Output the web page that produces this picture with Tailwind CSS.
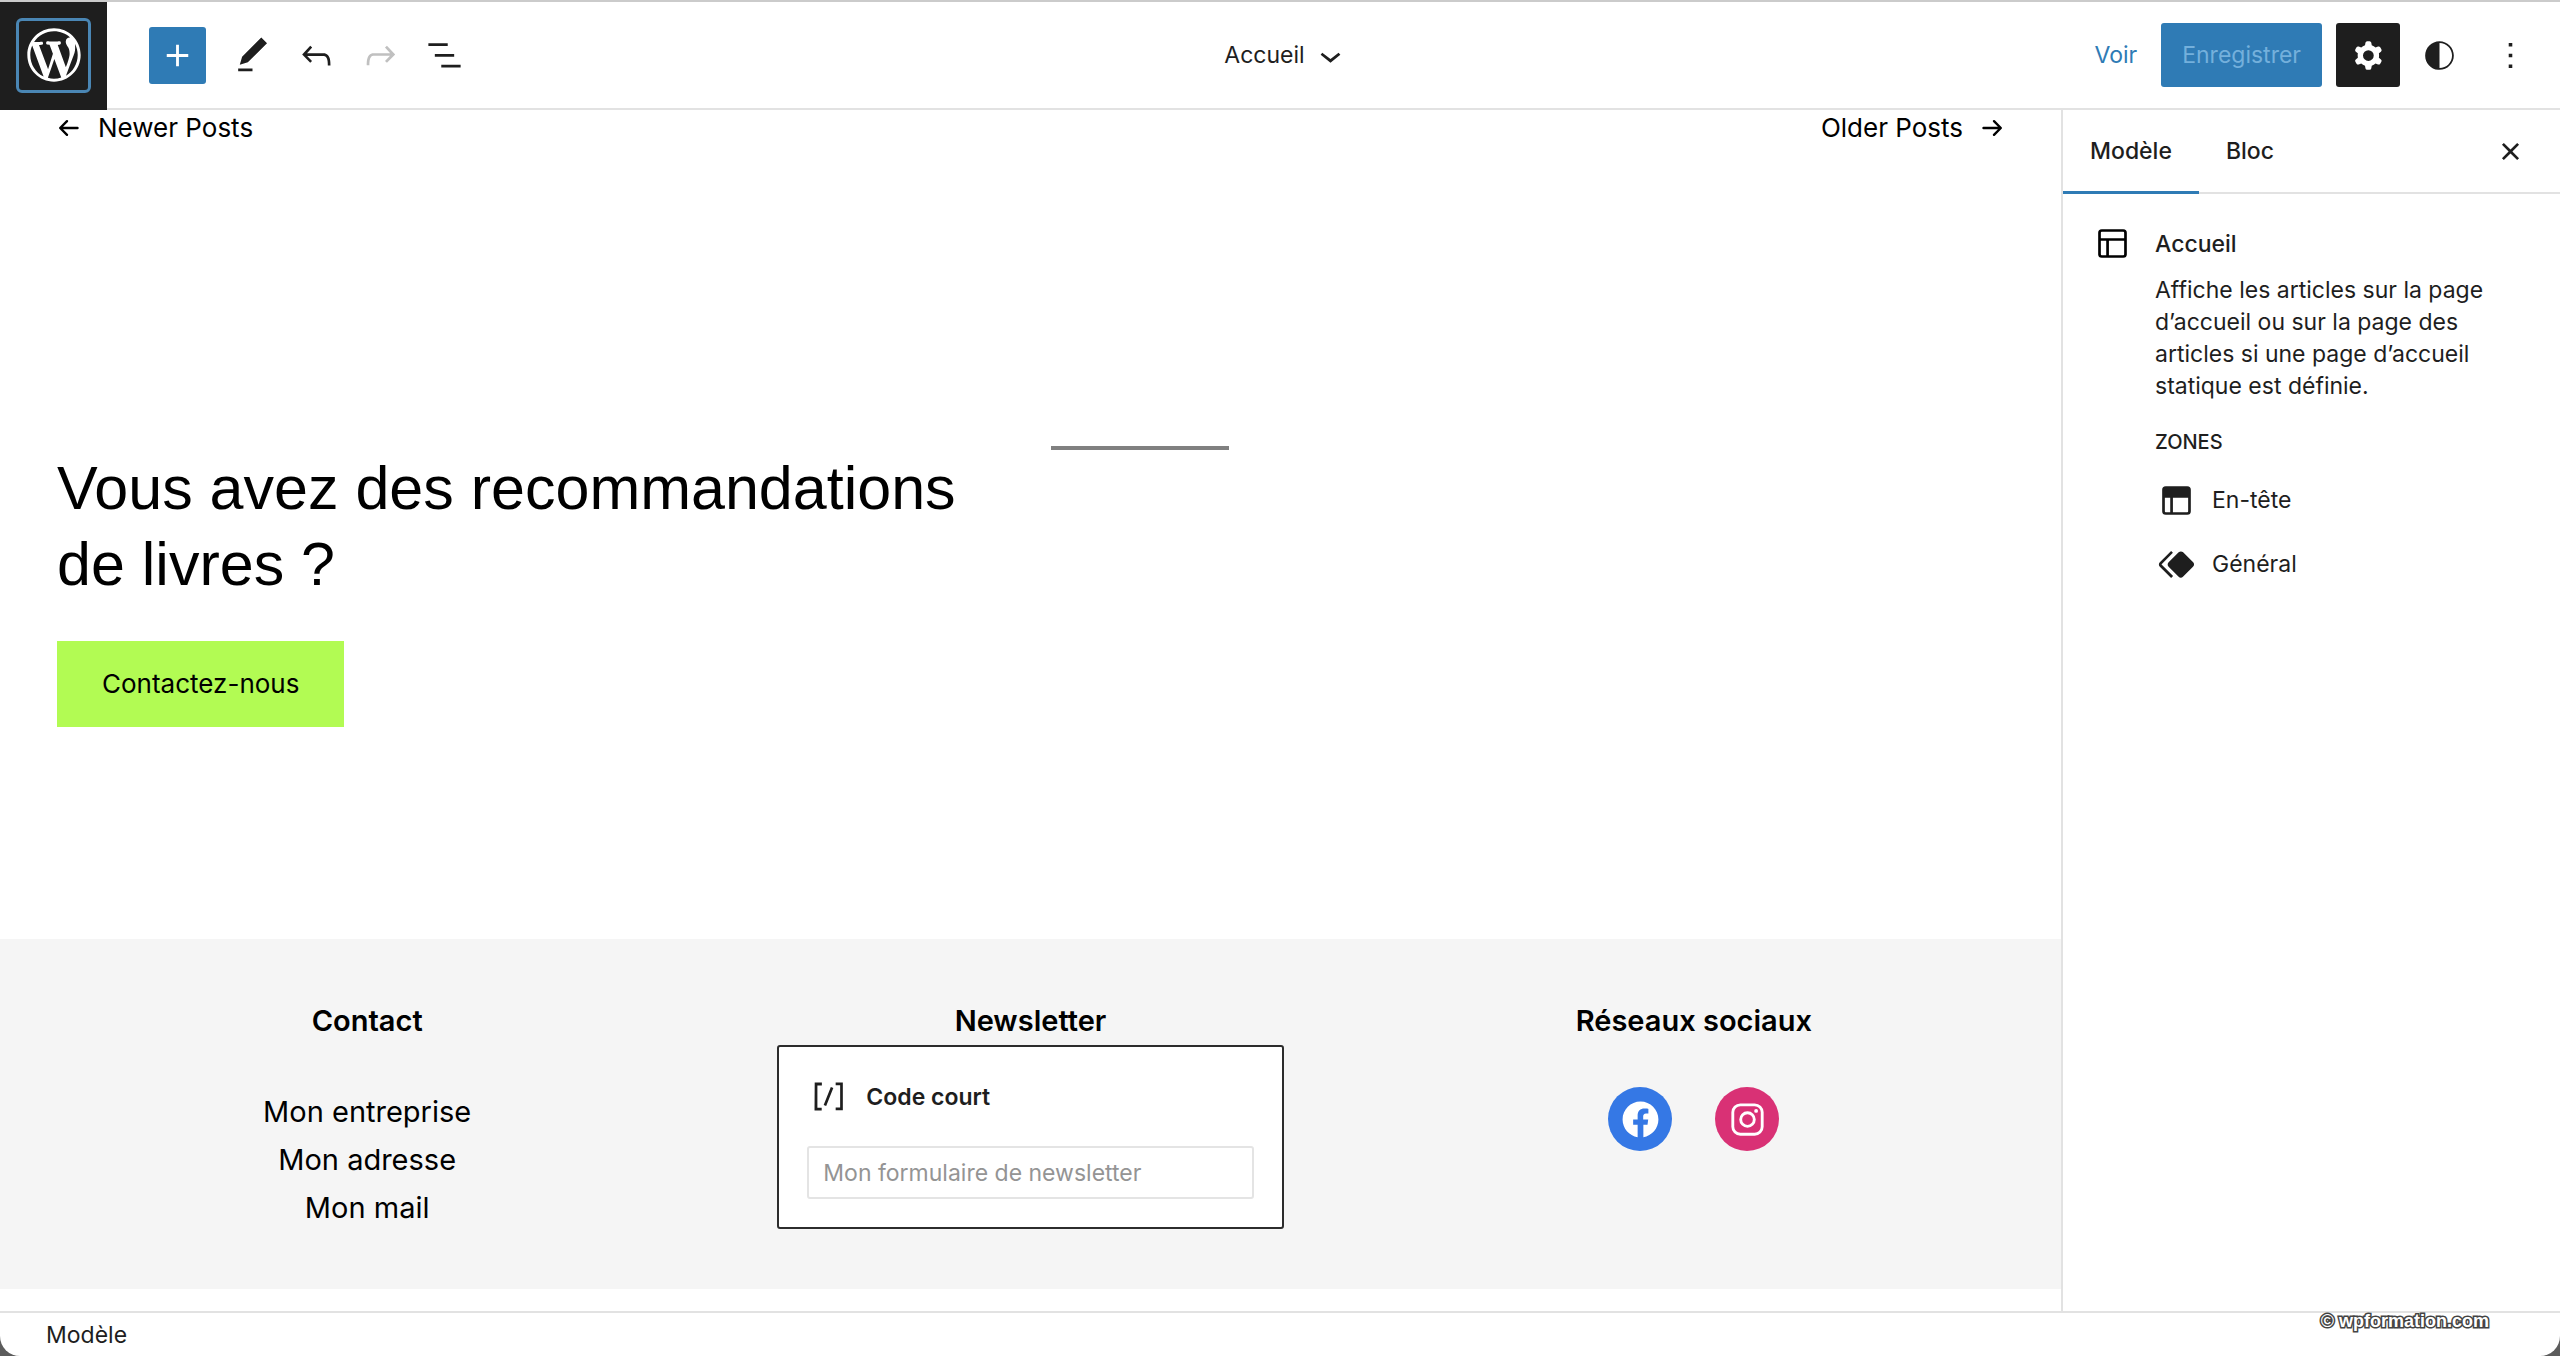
<!DOCTYPE html>
<html lang="fr">
<head>
<meta charset="utf-8">
<title>Accueil – Éditeur de site</title>
<script src="https://cdn.jsdelivr.net/npm/@tailwindcss/browser@4"></script>
</head>
<body class="bg-[#5c5c5c] font-['Inter',sans-serif] text-[#1e1e1e]">
<div class="flex min-h-screen flex-col overflow-hidden rounded-b-[20px] border-t-2 border-[#cbcbcb] bg-white text-[23px] leading-8">

  <!-- Top toolbar -->
  <header class="grid h-[108px] grid-cols-[1fr_auto_1fr] items-center border-b-2 border-[#e2e2e2]">
    <div class="flex h-[106px] items-center">
      <a href="#" aria-label="Tableau de bord" class="flex h-[108px] w-[107px] items-center justify-center self-start bg-[#1e1e1e] pb-[2px] text-white">
        <span class="flex size-[75px] items-center justify-center rounded-md border-3 border-[#4a86b4]">
          <svg class="size-16 shrink-0" viewBox="-2 -2 24 24" fill="currentColor"><path d="M20 10c0-5.51-4.49-10-10-10C4.48 0 0 4.49 0 10c0 5.52 4.48 10 10 10 5.51 0 10-4.48 10-10zM7.78 15.37L4.37 6.22c.55-.02 1.17-.08 1.17-.08.5-.06.44-1.13-.06-1.11 0 0-1.45.11-2.37.11-.18 0-.37 0-.58-.01C4.12 2.69 6.87 1.11 10 1.11c2.33 0 4.45.87 6.05 2.34-.68-.11-1.65.39-1.65 1.58 0 .74.45 1.36.9 2.1.35.61.55 1.36.55 2.46 0 1.49-1.4 5-1.4 5l-3.03-8.37c.54-.02.82-.17.82-.17.5-.05.44-1.25-.06-1.22 0 0-1.44.12-2.38.12-.87 0-2.33-.12-2.33-.12-.5-.03-.56 1.2-.06 1.22l.92.08 1.26 3.41zM17.41 10c.24-.64.74-1.87.43-4.25.7 1.29 1.05 2.71 1.05 4.25 0 3.29-1.73 6.24-4.4 7.78.97-2.59 1.94-5.2 2.92-7.78zM6.1 18.09C3.12 16.65 1.11 13.53 1.11 10c0-1.3.23-2.48.72-3.59C3.25 10.3 4.67 14.2 6.1 18.09zm4.03-6.63l2.58 6.98c-.86.29-1.76.45-2.71.45-.79 0-1.57-.11-2.29-.33.81-2.38 1.62-4.74 2.42-7.1z"/></svg>
        </span>
      </a>
      <button aria-label="Ajouter un bloc" class="ml-[42px] mr-[14px] flex size-[57px] items-center justify-center rounded-[3px] bg-[#2f7bb5] text-white">
        <svg class="size-[43px]" viewBox="0 0 24 24" fill="currentColor"><path d="M18 11.2h-5.2V6h-1.6v5.2H6v1.6h5.2V18h1.6v-5.2H18z"/></svg>
      </button>
      <button aria-label="Outils" class="flex size-16 items-center justify-center">
        <svg class="size-[43px]" viewBox="0 0 24 24" fill="currentColor"><path d="M20.1 5.1L16.9 2 6.2 12.7l-1.3 4.4 4.5-1.3L20.1 5.1zM4 20.8h8v-1.5H4v1.5z"/></svg>
      </button>
      <button aria-label="Annuler" class="flex size-16 items-center justify-center">
        <svg class="size-[43px]" viewBox="0 0 24 24" fill="currentColor"><path d="M18.3 11.7c-.6-.6-1.4-.9-2.3-.9H6.7l2.9-3.3-1.1-1-4.5 5L8.5 16l1-1-2.7-2.7H16c.5 0 .9.2 1.3.5 1 1 1 3.4 1 4.5v.3h1.5v-.2c0-1.5 0-4.3-1.5-5.7z"/></svg>
      </button>
      <button aria-label="Rétablir" disabled class="flex size-16 items-center justify-center text-[#c0c0c0]">
        <svg class="size-[43px]" viewBox="0 0 24 24" fill="currentColor"><path d="M15.6 6.5l-1.1 1 2.9 3.3H8c-.9 0-1.7.3-2.3.9-1.4 1.5-1.4 4.2-1.4 5.6v.2h1.5v-.3c0-1.1 0-3.5 1-4.5.3-.3.7-.5 1.3-.5h9.2L14.5 15l1.1 1.1 4.6-4.6-4.6-5z"/></svg>
      </button>
      <button aria-label="Vue en liste" class="flex size-16 items-center justify-center">
        <svg class="size-[43px]" viewBox="0 0 24 24" fill="currentColor"><path d="M13.8 5.2H3v1.5h10.8V5.2zm-3.6 12v1.5H21v-1.5H10.2zm7.2-6H6.6v1.5h10.8v-1.5z"/></svg>
      </button>
    </div>

    <button class="flex items-center gap-1 pl-4">
      <span>Accueil</span>
      <svg class="size-[43px]" viewBox="0 0 24 24" fill="currentColor"><path d="M17.5 11.6L12 16l-5.5-4.4.9-1.2L12 14l4.5-3.6 1 1.2z"/></svg>
    </button>

    <div class="flex items-center justify-end pr-[18px]">
      <a href="#" class="mr-6 text-[#2f7bb5]">Voir</a>
      <button disabled class="mr-[14px] h-16 rounded-[3px] bg-[#2f7bb5] px-[21px] text-[#74b0dc]">Enregistrer</button>
      <button aria-label="Réglages" class="mr-[7px] flex size-16 items-center justify-center rounded-[3px] bg-[#1e1e1e] text-white">
        <svg class="size-[43px]" viewBox="0 0 24 24" fill="currentColor"><path fill-rule="evenodd" d="M10.289 4.836A1 1 0 0111.275 4h1.306a1 1 0 01.987.836l.244 1.466c.787.26 1.503.679 2.108 1.218l1.393-.522a1 1 0 011.216.437l.653 1.13a1 1 0 01-.23 1.273l-1.148.944a6.025 6.025 0 010 2.435l1.149.946a1 1 0 01.23 1.272l-.653 1.13a1 1 0 01-1.216.437l-1.394-.522c-.605.54-1.32.958-2.108 1.218l-.244 1.466a1 1 0 01-.987.836h-1.306a1 1 0 01-.986-.836l-.244-1.466a5.995 5.995 0 01-2.108-1.218l-1.394.522a1 1 0 01-1.217-.436l-.653-1.131a1 1 0 01.23-1.272l1.149-.946a6.026 6.026 0 010-2.435l-1.148-.944a1 1 0 01-.23-1.272l.653-1.131a1 1 0 011.217-.437l1.393.522a5.994 5.994 0 012.108-1.218l.244-1.466zM14.929 12a3 3 0 11-6 0 3 3 0 016 0z"/></svg>
      </button>
      <button aria-label="Styles" class="mr-[7px] flex size-16 items-center justify-center">
        <svg class="size-[43px]" viewBox="0 0 24 24" fill="currentColor"><path d="M12 4c-4.4 0-8 3.6-8 8v.1c0 4.1 3.2 7.5 7.2 7.9h.8c4.4 0 8-3.6 8-8s-3.6-8-8-8zm0 15V5c3.9 0 7 3.1 7 7s-3.1 7-7 7z"/></svg>
      </button>
      <button aria-label="Options" class="flex size-16 items-center justify-center">
        <svg class="size-[43px]" viewBox="0 0 24 24" fill="currentColor"><path d="M13 19h-2v-2h2v2zm0-6h-2v-2h2v2zm0-6h-2V5h2v2z"/></svg>
      </button>
    </div>
  </header>

  <div class="flex flex-1">
    <!-- Canvas -->
    <main class="flex min-w-0 flex-1 flex-col text-black">
      <nav class="flex justify-between px-[57px] text-[26px] leading-9">
        <a href="#" class="flex items-center gap-[18px]">
          <svg class="h-6 w-[23px]" viewBox="0 0 23 24" fill="none" stroke="currentColor" stroke-width="2.4" stroke-linecap="round" stroke-linejoin="round"><path d="M20.500 12H3.500M10 5.200L3.200 12l6.800 6.800"/></svg>
          Newer Posts
        </a>
        <a href="#" class="flex items-center gap-[18px]">
          Older Posts
          <svg class="h-6 w-[23px]" viewBox="0 0 23 24" fill="none" stroke="currentColor" stroke-width="2.4" stroke-linecap="round" stroke-linejoin="round"><path d="M2.500 12h17M13 5.200l6.800 6.800-6.800 6.800"/></svg>
        </a>
      </nav>

      <section class="grid grid-cols-2 gap-x-10 px-[57px] pt-[300px]">
        <div>
          <h2 class="pt-1 font-['Liberation_Sans',sans-serif] text-[61px] leading-[76px]">Vous avez des recommandations<br>de livres ?</h2>
          <a href="#" class="mt-[39px] inline-flex h-[86px] items-center bg-[#b2fb53] px-[45px] text-[26px]">Contactez-nous</a>
        </div>
        <hr class="h-1 w-[178px] border-0 bg-[#808080]">
      </section>

      <footer class="mt-[212px] grid h-[350px] grid-cols-3 gap-x-[157px] bg-[#f5f5f5] px-[114px] pt-[58px] text-center text-[29px] leading-[48px]">
        <section>
          <h3 class="font-semibold">Contact</h3>
          <address class="pt-[43px] not-italic">Mon entreprise<br>Mon adresse<br>Mon mail</address>
        </section>
        <section>
          <h3 class="font-semibold">Newsletter</h3>
          <div class="flex flex-col rounded-[3px] border-2 border-[#2c2c2c] bg-white p-7 text-left text-[23px] leading-8 text-[#1e1e1e]">
            <label for="shortcode" class="flex items-center gap-4 font-semibold">
              <svg class="size-[43px]" viewBox="0 0 24 24" fill="currentColor"><path d="M16 4.2v1.500h2.500v12.500H16v1.500h4V4.200h-4zM4.200 19.800h4v-1.500H5.800V5.800h2.500V4.200h-4l-.1 15.600zm5.100-3.100l1.400.6 4-10-1.400-.6-4 10z"/></svg>
              Code court
            </label>
            <input id="shortcode" type="text" placeholder="Mon formulaire de newsletter" class="mt-7 h-[53px] w-full rounded-[3px] border-2 border-[#e4e4e4] px-[14px] placeholder:text-[#949494]">
          </div>
        </section>
        <section>
          <h3 class="font-semibold">Réseaux sociaux</h3>
          <div class="flex justify-center gap-[43px] pt-[42px] text-white">
            <a href="#" aria-label="Facebook" class="flex size-16 items-center justify-center rounded-full bg-[#3578e5]">
              <svg class="size-[43px]" viewBox="0 0 24 24" fill="currentColor"><path d="M12 2C6.500 2 2 6.500 2 12c0 5 3.700 9.100 8.400 9.900v-7H7.900V12h2.500V9.800c0-2.500 1.500-3.900 3.800-3.900 1.100 0 2.200.2 2.200.2v2.500h-1.300c-1.200 0-1.600.8-1.600 1.600V12h2.800l-.4 2.900h-2.300v7C18.300 21.100 22 17 22 12c0-5.500-4.500-10-10-10z"/></svg>
            </a>
            <a href="#" aria-label="Instagram" class="flex size-16 items-center justify-center rounded-full bg-[#d93175]">
              <svg class="size-[43px]" viewBox="0 0 24 24" fill="none" stroke="currentColor" stroke-width="1.600"><rect x="3.800" y="3.800" width="16.400" height="16.400" rx="4.200"/><circle cx="12" cy="12" r="3.800"/><circle cx="16.800" cy="7.200" r="1.080" fill="currentColor" stroke="none"/></svg>
            </a>
          </div>
        </section>
      </footer>
    </main>

    <!-- Settings sidebar -->
    <aside class="w-[499px] shrink-0 border-l-2 border-[#e2e2e2]">
      <div class="flex h-[84px] border-b-2 border-[#e2e2e2] font-medium">
        <button class="-mb-[2px] border-b-3 border-[#2f7bb5] px-[27px]">Modèle</button>
        <button class="px-[27px]">Bloc</button>
        <button aria-label="Fermer" class="ml-auto mr-7 self-center">
          <svg class="size-[43px]" viewBox="0 0 24 24" fill="currentColor"><path d="M12 13.060l3.712 3.713 1.061-1.060L13.061 12l3.712-3.712-1.060-1.060L12 10.938 8.288 7.227l-1.061 1.060L10.939 12l-3.712 3.712 1.060 1.061L12 13.061z"/></svg>
        </button>
      </div>
      <div class="flex gap-[21px] p-7">
        <svg class="size-[43px] shrink-0 text-black" viewBox="0 0 24 24" fill="currentColor"><path d="M18 5.500H6a.5.5 0 00-.5.5v3h13V6a.5.5 0 00-.5-.5zm.5 5H10v8h8a.5.5 0 00.5-.5v-7.500zm-10 0h-3V18a.5.5 0 00.5.5h2.500v-8zM6 4h12a2 2 0 012 2v12a2 2 0 01-2 2H6a2 2 0 01-2-2V6a2 2 0 012-2z"/></svg>
        <div class="pt-[6px]">
          <h2 class="font-medium">Accueil</h2>
          <p class="pt-[14px]">Affiche les articles sur la page<br>d’accueil ou sur la page des<br>articles si une page d’accueil<br>statique est définie.</p>
          <h3 class="pt-6 text-[20px] font-medium">ZONES</h3>
          <ul class="pt-[10px]">
            <li><button class="flex h-16 items-center gap-[14px]">
              <svg class="size-[43px]" viewBox="0 0 24 24" fill="currentColor"><path d="M18.500 10.500H10v8h8a.5.5 0 00.5-.5v-7.500zm-10 0h-3V18a.5.5 0 00.5.5h2.500v-8zM6 4h12a2 2 0 012 2v12a2 2 0 01-2 2H6a2 2 0 01-2-2V6a2 2 0 012-2z"/></svg>
              En-tête
            </button></li>
            <li><button class="flex h-16 items-center gap-[14px]">
              <svg class="size-[43px]" viewBox="0 0 24 24" fill="currentColor"><path d="M21.300 10.800l-5.600-5.600c-.7-.7-1.800-.7-2.500 0l-5.600 5.600c-.7.7-.7 1.800 0 2.500l5.600 5.600c.3.3.8.5 1.200.5s.9-.2 1.200-.5l5.600-5.600c.8-.7.8-1.900.1-2.500zm-17.600 1L10 5.500l-1-1-6.300 6.300c-.7.7-.7 1.800 0 2.500L9 19.500l1.100-1.100-6.300-6.300c-.2 0-.2-.2-.1-.3z"/></svg>
              Général
            </button></li>
          </ul>
        </div>
      </div>
    </aside>
  </div>

  <!-- Breadcrumb bar -->
  <div class="relative flex h-[45px] items-center border-t-2 border-[#e2e2e2] px-[46px]">
    <span>Modèle</span>
    <span class="absolute right-[71px] -top-[2px] font-['Liberation_Sans',sans-serif] text-[18px] leading-5 font-bold text-white [paint-order:stroke_fill] [-webkit-text-stroke:3px_#444444]">© wpformation.com</span>
  </div>
</div>
</body>
</html>
